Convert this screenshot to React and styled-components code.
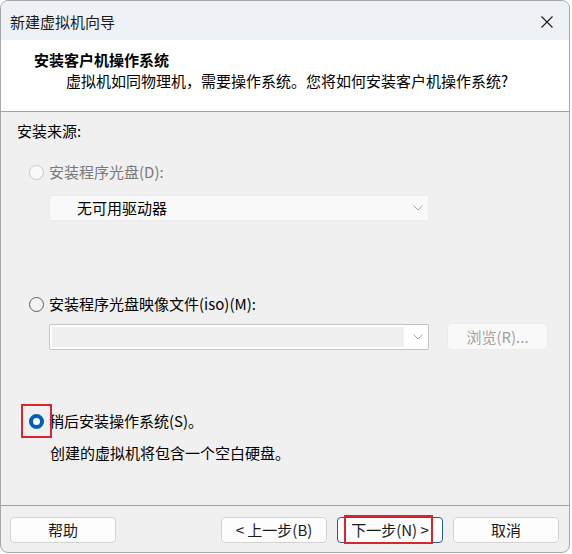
import React from 'react';
import styled, { createGlobalStyle } from 'styled-components';

const Global = createGlobalStyle`
    body {
        margin: 0;
        background: #ffffff;
        font-family: "Noto Sans CJK SC", "Noto Sans", sans-serif;
        font-size: 15px;
        color: #000;
    }
`

function Chevron() {
    return (
        <svg width="10" height="6" viewBox="0 0 10 6">
            <path d="M0.5 0.5 L5 5 L9.5 0.5" fill="none" stroke="#a8a8a8" strokeWidth="1" />
        </svg>
    )
}

function Main() {
    return (
        <>
            <Global />
            <Win>
                <TitleBar>
                    <span>新建虚拟机向导</span>
                    <Close>
                        <svg width="12" height="12" viewBox="0 0 12 12">
                            <path d="M0.5 0.5 L11.5 11.5 M11.5 0.5 L0.5 11.5" stroke="#1b1b1b" strokeWidth="1.1" />
                        </svg>
                    </Close>
                </TitleBar>
                <Header>
                    <HeadTitle>安装客户机操作系统</HeadTitle>
                    <HeadSub>虚拟机如同物理机，需要操作系统。您将如何安装客户机操作系统?</HeadSub>
                </Header>
                <Body>
                    <Label>安装来源:</Label>
                    <RadioRow $top={21} $disabled>
                        <Radio $disabled />
                        <span>安装程序光盘(D):</span>
                    </RadioRow>
                    <Combo $top={13} $disabled>
                        <ComboText>无可用驱动器</ComboText>
                        <Chevron />
                    </Combo>
                    <RadioRow $top={73}>
                        <Radio />
                        <span>安装程序光盘映像文件(iso)(M):</span>
                    </RadioRow>
                    <FileRow>
                        <Combo>
                            <EditArea />
                            <Chevron />
                        </Combo>
                        <Browse>浏览(R)...</Browse>
                    </FileRow>
                    <RadioRow $top={61}>
                        <Mark>
                            <Radio $checked />
                            <RedBox $l={-8} $t={-10} $w={31} $h={34} />
                        </Mark>
                        <span>稍后安装操作系统(S)。</span>
                    </RadioRow>
                    <Desc>创建的虚拟机将包含一个空白硬盘。</Desc>
                </Body>
                <Footer>
                    <Button>帮助</Button>
                    <Spacer />
                    <Button>&lt; 上一步(B)</Button>
                    <Button $focus>
                        下一步(N) &gt;
                        <RedBox $l={6} $t={-3} $w={89} $h={29} />
                    </Button>
                    <Button>取消</Button>
                </Footer>
            </Win>
        </>
    )
}

const Win = styled.div`
    width: 568px;
    height: 551px;
    border: 1px solid #a7a7a7;
    border-radius: 8px;
    overflow: hidden;
    display: flex;
    flex-direction: column;
    background: #f0f0f0;
`

const TitleBar = styled.div`
    height: 39px;
    flex-shrink: 0;
    background: #eef2f7;
    display: flex;
    align-items: center;
    justify-content: space-between;
    padding: 2px 0 0 9px;
    box-sizing: border-box;
    line-height: 20px;
    color: #1a1a1a;
`

const Close = styled.div`
    width: 36px;
    display: flex;
    justify-content: center;
    padding-right: 4px;
    padding-top: 1px;
`

const Header = styled.div`
    height: 72px;
    flex-shrink: 0;
    background: #ffffff;
    border-bottom: 1px solid #a0a0a0;
    padding: 10px 0 0 33px;
    box-sizing: border-box;
`

const HeadTitle = styled.div`
    font-weight: bold;
    line-height: 20px;
`

const HeadSub = styled.div`
    margin: 1px 0 0 32px;
    line-height: 20px;
`

const Body = styled.div`
    flex: 1;
    display: flex;
    flex-direction: column;
    padding: 9px 0 0 16px;
`

const Label = styled.div`
    line-height: 20px;
`

const RadioRow = styled.div`
    display: flex;
    align-items: center;
    gap: 5px;
    margin: ${p => p.$top}px 0 0 12px;
    line-height: 20px;
    color: ${p => p.$disabled ? '#7a7a7a' : '#000'};
`

const Mark = styled.div`
    position: relative;
    display: flex;
`

const Radio = styled.span`
    width: 15px;
    height: 15px;
    box-sizing: border-box;
    border-radius: 50%;
    flex-shrink: 0;
    border: ${p => p.$checked ? '4.5px solid #005fb8' : p.$disabled ? '1px solid #c9c9c9' : '1px solid #5e5e5e'};
    background: ${p => p.$checked ? '#ffffff' : p.$disabled ? '#f9f9f9' : '#f4f4f4'};
`

const RedBox = styled.span`
    position: absolute;
    left: ${p => p.$l}px;
    top: ${p => p.$t}px;
    width: ${p => p.$w}px;
    height: ${p => p.$h}px;
    box-sizing: border-box;
    border: 2px solid #d9262e;
    pointer-events: none;
`

const Combo = styled.div`
    width: 380px;
    height: 26px;
    box-sizing: border-box;
    margin: ${p => p.$top || 0}px 0 0 32px;
    display: flex;
    align-items: center;
    padding: 2px 5px 2px 2px;
    gap: 9px;
    background: ${p => p.$disabled ? '#f9f9f9' : '#ffffff'};
    border: 1px solid ${p => p.$disabled ? '#ececec' : '#c3c3c3'};
    border-radius: 2px;
`

const ComboText = styled.span`
    flex: 1;
    padding-left: 25px;
    line-height: 20px;
`

const EditArea = styled.div`
    flex: 1;
    align-self: stretch;
    background: #f0f0f0;
`

const FileRow = styled.div`
    display: flex;
    align-items: center;
    gap: 18px;
    margin-top: 9px;
    & > ${Combo} {
        margin-left: 32px;
    }
`

const Browse = styled.div`
    width: 101px;
    height: 27px;
    box-sizing: border-box;
    border: 1px solid #ebebeb;
    border-radius: 4px;
    background: #f9f9f9;
    color: #a2a2a2;
    display: flex;
    align-items: center;
    justify-content: center;
    line-height: 20px;
`

const Desc = styled.div`
    margin: 12px 0 0 33px;
    line-height: 20px;
`

const Footer = styled.div`
    height: 47px;
    flex-shrink: 0;
    border-top: 1px solid #a0a0a0;
    display: flex;
    align-items: flex-start;
    gap: 10px;
    padding: 11px 10px 0 9px;
    box-sizing: border-box;
`

const Spacer = styled.div`
    flex: 1;
`

const Button = styled.div`
    position: relative;
    width: 106px;
    height: 26px;
    box-sizing: border-box;
    border: 1px solid ${p => p.$focus ? '#1d5f9c' : '#d3d3d3'};
    border-radius: 4px;
    background: #fdfdfd;
    display: flex;
    align-items: center;
    justify-content: center;
    line-height: 20px;
    color: #1a1a1a;
`

export default Main;
